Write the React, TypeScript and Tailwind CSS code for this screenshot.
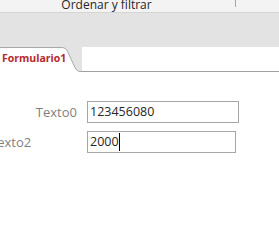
export default function App() {
  return (
    <main className="flex h-[240px] w-[279px] flex-col overflow-hidden bg-white font-['Open_Sans',sans-serif]">
      <div className="flex h-[13px] shrink-0 overflow-hidden border-b border-[#d5d5d5] bg-[#f3f3f3]">
        <div className="flex w-[235px] justify-center">
          <span className="-mt-[3px] ml-[-22px] text-[12px] leading-[16px] text-[#262626]">Ordenar y filtrar</span>
        </div>
        <div className="h-[7px] w-px bg-[#a6a6a6]" />
      </div>

      <div className="h-[34px] shrink-0 bg-[#e3e3e3]" />

      <div className="flex h-[25px] shrink-0 bg-[#e3e3e3]">
        <div className="relative w-[82px] shrink-0">
          <svg className="absolute inset-0" width="82" height="25" viewBox="0 0 82 25">
            <path d="M0 0.5 H61 C64.5 0.5 66 1.5 67.5 4.5 L75 20.5 C76.5 23.5 78 24.5 81 24.5 H82 V25 H0 Z" fill="#ffffff" />
            <path d="M0 0.5 H61 C64.5 0.5 66 1.5 67.5 4.5 L75 20.5 C76.5 23.5 78 24.5 81 24.5 H82" fill="none" stroke="#a8a8a8" strokeWidth="1" />
          </svg>
          <span className="relative block pl-[2px] pt-[4px] text-[10.5px] font-bold leading-[14px] text-[#b7282e]">Formulario1</span>
        </div>
        <div className="flex-1 border-b border-[#a0a0a0] bg-white" />
      </div>

      <div className="flex flex-col gap-[8px] pt-[29px]">
        <div className="flex items-center">
          <span className="w-[77px] text-right text-[13px] leading-[22px] text-[#7f7f7f]">Texto0</span>
          <div className="ml-[10px] flex h-[22px] w-[152px] items-center border border-[#a6a6a6] px-[2px] text-[12.5px] text-[#262626]">
            123456080
          </div>
        </div>
        <div className="flex items-center">
          <span className="ml-[-10px] w-[97px] text-[13px] leading-[22px] text-[#7f7f7f]">Texto2</span>
          <div className="flex h-[22px] w-[149px] items-center border border-[#a6a6a6] px-[2px] text-[12.5px] text-[#262626]">
            2000
            <span className="h-[18px] w-px bg-black" />
          </div>
        </div>
      </div>
    </main>
  );
}
